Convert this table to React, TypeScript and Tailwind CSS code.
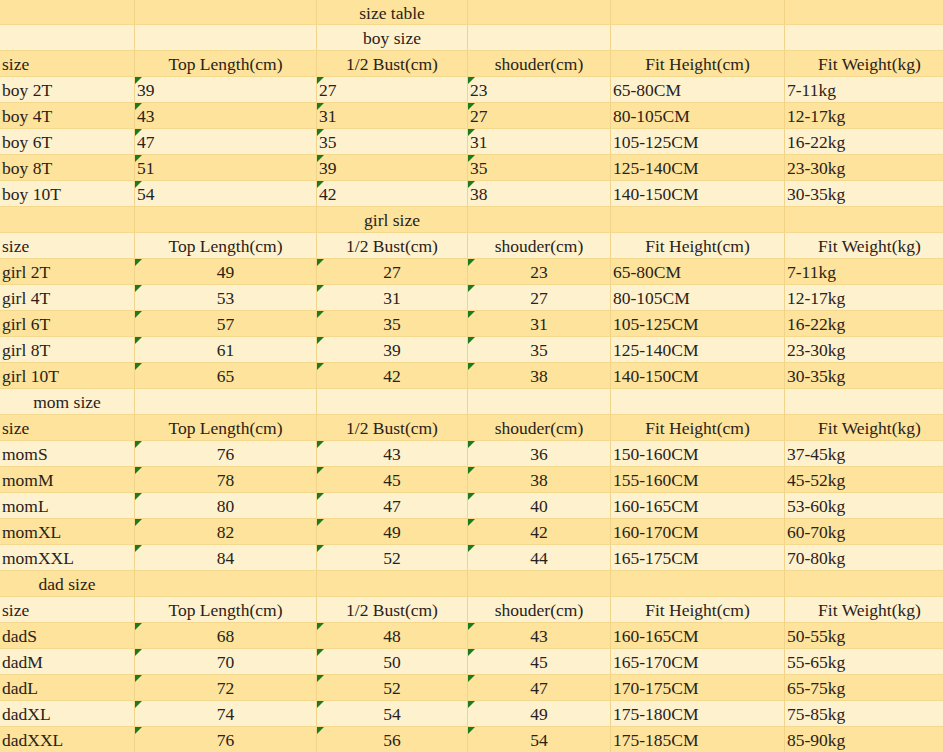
// Size chart rendered as a spreadsheet-style grid
type Row = string[]

const COLS = 'grid grid-cols-[135px_182px_151px_143px_174px_170px]'

const boy: Row[] = [
  ['boy 2T', '39', '27', '23', '65-80CM', '7-11kg'],
  ['boy 4T', '43', '31', '27', '80-105CM', '12-17kg'],
  ['boy 6T', '47', '35', '31', '105-125CM', '16-22kg'],
  ['boy 8T', '51', '39', '35', '125-140CM', '23-30kg'],
  ['boy 10T', '54', '42', '38', '140-150CM', '30-35kg'],
]

const girl: Row[] = [
  ['girl 2T', '49', '27', '23', '65-80CM', '7-11kg'],
  ['girl 4T', '53', '31', '27', '80-105CM', '12-17kg'],
  ['girl 6T', '57', '35', '31', '105-125CM', '16-22kg'],
  ['girl 8T', '61', '39', '35', '125-140CM', '23-30kg'],
  ['girl 10T', '65', '42', '38', '140-150CM', '30-35kg'],
]

const mom: Row[] = [
  ['momS', '76', '43', '36', '150-160CM', '37-45kg'],
  ['momM', '78', '45', '38', '155-160CM', '45-52kg'],
  ['momL', '80', '47', '40', '160-165CM', '53-60kg'],
  ['momXL', '82', '49', '42', '160-170CM', '60-70kg'],
  ['momXXL', '84', '52', '44', '165-175CM', '70-80kg'],
]

const dad: Row[] = [
  ['dadS', '68', '48', '43', '160-165CM', '50-55kg'],
  ['dadM', '70', '50', '45', '165-170CM', '55-65kg'],
  ['dadL', '72', '52', '47', '170-175CM', '65-75kg'],
  ['dadXL', '74', '54', '49', '175-180CM', '75-85kg'],
  ['dadXXL', '76', '56', '54', '175-185CM', '85-90kg'],
]

const HEADER = ['size', 'Top Length(cm)', '1/2 Bust(cm)', 'shouder(cm)', 'Fit Height(cm)', 'Fit Weight(kg)']

type Line =
  | { kind: 'title'; text: string; col: number }
  | { kind: 'header' }
  | { kind: 'data'; cells: Row; leftNums: boolean }

function section(title: string, titleCol: number, rows: Row[], leftNums = false): Line[] {
  return [
    { kind: 'title', text: title, col: titleCol },
    { kind: 'header' },
    ...rows.map((cells) => ({ kind: 'data' as const, cells, leftNums })),
  ]
}

const lines: Line[] = [
  { kind: 'title', text: 'size table', col: 2 },
  ...section('boy size', 2, boy, true),
  ...section('girl size', 2, girl),
  ...section('mom size', 0, mom),
  ...section('dad size', 0, dad),
]

function Flag() {
  // Excel's "number stored as text" marker
  return (
    <span
      aria-hidden
      className="absolute left-0 top-0 w-0 h-0 border-t-[7px] border-r-[7px] border-t-[#1d7a1d] border-r-transparent"
    />
  )
}

function Cell({ children, align = 'left', flag = false }: { children?: string; align?: 'left' | 'center'; flag?: boolean }) {
  return (
    <div
      className={`relative flex items-center border-r border-[#f1d48a] px-[2px] pt-[3px] whitespace-nowrap overflow-hidden ${
        align === 'center' ? 'justify-center' : 'justify-start'
      }`}
    >
      {flag && <Flag />}
      {children}
    </div>
  )
}

export default function App() {
  return (
    <div className="w-[943px] h-[752px] overflow-hidden bg-[#fef1cd] text-[17.5px] leading-none text-[#2a2219] font-['Liberation_Serif',serif]">
      {lines.map((line, i) => {
        const bg = i % 2 === 0 ? 'bg-[#fde39b]' : 'bg-[#fef1cd]'
        const h = i === 0 ? 'h-[25px]' : 'h-[26px]'
        return (
          <div key={i} className={`${COLS} ${bg} ${h} border-b border-[#f4d88e]`}>
            {line.kind === 'title' &&
              [0, 1, 2, 3, 4, 5].map((c) => (
                <Cell key={c} align="center">
                  {c === line.col ? line.text : undefined}
                </Cell>
              ))}
            {line.kind === 'header' &&
              HEADER.map((t, c) => (
                <Cell key={c} align={c === 0 ? 'left' : 'center'}>
                  {t}
                </Cell>
              ))}
            {line.kind === 'data' &&
              line.cells.map((t, c) => {
                const num = c >= 1 && c <= 3
                return (
                  <Cell key={c} flag={num} align={num && !line.leftNums ? 'center' : 'left'}>
                    {t}
                  </Cell>
                )
              })}
          </div>
        )
      })}
    </div>
  )
}
